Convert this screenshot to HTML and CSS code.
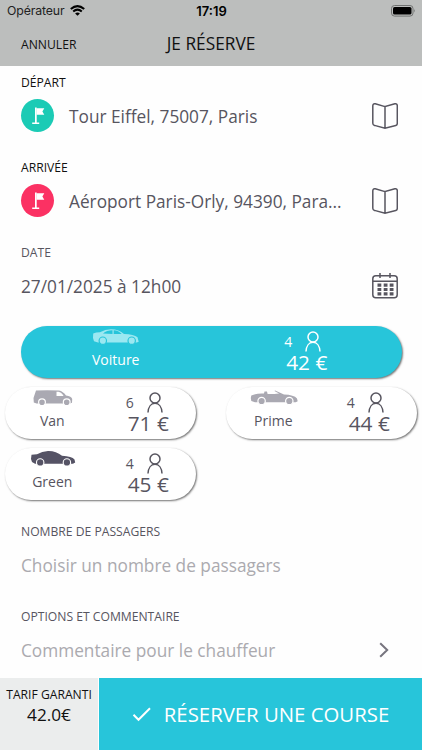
FILE: index.html
```html
<!DOCTYPE html>
<html lang="fr">
<head>
<meta charset="utf-8">
<title>Je réserve</title>
<link rel="stylesheet" href="styles.css">
</head>
<body>
<svg class="defs" width="0" height="0">
  <symbol id="flag" viewBox="0 0 33 33"><path d="M14 8.500h1.700v15h2.500v1.500h-7v-1.500H14z"/><path d="M15.500 9.200h7.800l-1.900 3.200 1.900 3.300h-7.800z"/></symbol>
  <symbol id="book" viewBox="0 0 26 26"><path d="M13 3.600 3.300.8Q.9.400.8 2.800v17.500q0 1.700 1.700 2.100L13 25.200l10.800-2.800q1.500-.4 1.500-2.100V2.800Q25.200.400 22.800.8L13 3.600v21.600"/></symbol>
  <symbol id="person" viewBox="0 0 16 21"><circle cx="8" cy="6" r="5"/><path d="M1 20.500C1.300 15 4 11.300 8 11.300s6.700 3.700 7 9.200"/></symbol>
</svg>
<div class="app">
  <header class="top">
    <div class="status">
      <div class="carrier"><span>Opérateur</span><svg width="15" height="11" viewBox="0 0 15 11"><g fill="none" stroke="#000" stroke-width="2.100"><path d="M.8 4Q7.500-1.700 14.200 4M3.200 6.500q4.300-3.600 8.600 0"/></g><path d="M5.100 8.400q2.400-1.800 4.800 0l-2.400 2.400z"/></svg></div>
      <div class="time">17:19</div>
      <div class="battery"><svg width="25" height="12" viewBox="0 0 25 12"><rect x=".5" y=".5" width="21.500" height="10.600" rx="3" fill="none" stroke="#707271"/><rect x="2" y="2" width="18.500" height="7.600" rx="1.600"/><path d="M23.200 4q1.600 1.800 0 3.600z" fill="#707271"/></svg></div>
    </div>
    <div class="nav"><span class="cancel">ANNULER</span><h1>JE RÉSERVE</h1><span></span></div>
  </header>
  <main>
    <section class="field strong">
      <h2>DÉPART</h2>
      <div class="row"><span class="pin green"><svg width="33" height="33"><use href="#flag"/></svg></span><span class="value">Tour Eiffel, 75007, Paris</span><svg class="line end" width="26" height="26"><use href="#book"/></svg></div>
    </section>
    <section class="field strong">
      <h2>ARRIVÉE</h2>
      <div class="row"><span class="pin red"><svg width="33" height="33"><use href="#flag"/></svg></span><span class="value">Aéroport Paris-Orly, 94390, Para...</span><svg class="line end" width="26" height="26"><use href="#book"/></svg></div>
    </section>
    <section class="field">
      <h2>DATE</h2>
      <div class="row"><span class="value">27/01/2025 à 12h00</span><svg class="end" width="26" height="26" viewBox="0 0 26 26"><g fill="none" stroke="#57555f" stroke-width="1.500"><rect x=".8" y="2.700" width="24.400" height="22" rx="3"/><path d="M1 8.200h24M8 0v5M18 0v5"/></g><path d="M5.500 10.500h3.800v3.200H5.500zm6.200 0h3.800v3.200h-3.800zm6 0h3.800v3.200h-3.800zM5.500 14.900h3.800v3.200H5.500zm6.200 0h3.800v3.200h-3.800zm6 0h3.800v3.200h-3.800zM5.500 19.300h3.800v3.200H5.500zm6.200 0h3.800v3.200h-3.800zm6 0h3.800v3.200h-3.800z" fill="#57555f"/></svg></div>
    </section>
    <section class="cars">
      <article class="car selected">
        <div class="kind"><svg width="48" height="16" viewBox="0 0 48 16"><path fill="#9be8f1" fill-rule="evenodd" d="M1.200 4.500Q4 3.200 8 3.200 13 .3 19 .2q8 0 13 4.900 10 .3 13.500 3.200l1.200 4.500-2 .6H6L2 12.200 1 9zM11 4.500l9.500.6V1.300Q15 1.200 11 4.500zM21.700 1.300v3.800h8Q26.500 1.500 21.700 1.300z"/><g fill="#9be8f1" stroke="#27c5da" stroke-width="1.200"><circle cx="10.800" cy="11.700" r="3.700"/><circle cx="39.700" cy="11.700" r="3.700"/></g></svg><span>Voiture</span></div>
        <div class="fare"><div class="seats"><span>4</span><svg class="line" width="16" height="21"><use href="#person"/></svg></div><b>42 €</b></div>
      </article>
      <article class="car">
        <div class="kind"><svg width="40" height="16" viewBox="0 0 40 16"><path fill="#aaa9b2" fill-rule="evenodd" d="M3 .4Q16-.1 26 .5q4 .8 7 5 5.500.6 6.200 3.500l-.2 3.800-2 .8H3.500L.8 12.500.5 8zM23.500 1.800v4.300h6.500l.5-.6q-2.500-3.400-5-3.700z"/><g fill="#aaa9b2" stroke="#fff" stroke-width="1.200"><circle cx="9" cy="12.300" r="3.400"/><circle cx="33.700" cy="12.300" r="3.400"/></g></svg><span>Van</span></div>
        <div class="fare"><div class="seats"><span>6</span><svg class="line" width="16" height="21"><use href="#person"/></svg></div><b>71 €</b></div>
      </article>
      <article class="car">
        <div class="kind"><svg width="48" height="16" viewBox="0 0 48 16"><path fill="#aaa9b2" d="M1.300 5.500Q7 3 14 3.500l.5-2 2.500.1.600 2.400h7l2-.2 2.500-.2-4.600-2.600.6-.6L34 4.500q10 .3 13 4l.7 2.700-2 1.100H5L1.300 11 .8 8z"/><g fill="#aaa9b2" stroke="#fff" stroke-width="1.200"><circle cx="11.600" cy="11" r="3.700"/><circle cx="39.300" cy="11" r="3.700"/></g></svg><span>Prime</span></div>
        <div class="fare"><div class="seats"><span>4</span><svg class="line" width="16" height="21"><use href="#person"/></svg></div><b>44 €</b></div>
      </article>
      <article class="car">
        <div class="kind"><svg width="48" height="16" viewBox="0 0 48 16"><path fill="#555365" d="M2.500 3.700 8 3.200Q13 .4 19 .1q8-.2 14 4.700 10 .4 12.500 3.700l.7 3-2.200 1.300H6L3 11 2 8z"/><g fill="#555365" stroke="#fff" stroke-width="1.100"><circle cx="11.200" cy="11.400" r="3.700"/><circle cx="37.900" cy="11.400" r="3.700"/></g></svg><span>Green</span></div>
        <div class="fare"><div class="seats"><span>4</span><svg class="line" width="16" height="21"><use href="#person"/></svg></div><b>45 €</b></div>
      </article>
    </section>
    <section class="field lower">
      <h2>NOMBRE DE PASSAGERS</h2>
      <div class="row"><span class="value hint">Choisir un nombre de passagers</span></div>
    </section>
    <section class="field lower">
      <h2>OPTIONS ET COMMENTAIRE</h2>
      <div class="row"><span class="value hint">Commentaire pour le chauffeur</span><svg class="end chevron" width="10" height="16" viewBox="0 0 10 16"><path d="m1.200 1.200 7 6.800-7 6.800" fill="none" stroke="#77757f" stroke-width="2"/></svg></div>
    </section>
  </main>
  <footer>
    <div class="tariff"><span>TARIF GARANTI</span><strong>42.0€</strong></div>
    <button><svg width="20" height="15" viewBox="0 0 20 15"><path d="m1.500 7.800 5 5L18 1.300" fill="none" stroke="#fff" stroke-width="2"/></svg><span>RÉSERVER UNE COURSE</span></button>
  </footer>
</div>
</body>
</html>
```
FILE: styles.css
```css
* { box-sizing: border-box; }
body { margin: 0; background: #fefefe; font-family: "Open Sans", "Noto Sans", sans-serif; color: #57555f; }
h1, h2 { margin: 0; font-weight: 400; }
svg { display: block; flex: none; }
.defs { position: absolute; }
.app { width: 422px; height: 750px; display: flex; flex-direction: column; overflow: hidden; }
.top { height: 66px; background: #bcbebd; color: #111; flex: none; }
.status { height: 22px; display: grid; grid-template-columns: 1fr 60px 1fr; align-items: center; padding: 0 6px 0 7px; font: 12.3px/22px Inter, sans-serif; color: #000; }
.carrier { display: flex; align-items: center; gap: 5px; color: #222; }
.carrier svg { margin-top: -2px; }
.carrier span { letter-spacing: -.12px; }
.time { text-align: center; font-weight: 600; font-size: 13px; }
.battery { justify-self: end; }
.nav { display: grid; grid-template-columns: 1fr auto 1fr; align-items: center; padding: 0 21px; height: 43px; }
.cancel { font-size: 12.15px; padding-top: 2px; }
h1 { font-size: 17.3px; line-height: 24px; }
main { flex: 1; min-height: 0; overflow: hidden; padding-top: 8px; }
.field { height: 85px; padding: 0 24px 0 21px; }
h2 { font-size: 12.15px; line-height: 16px; padding-top: 1px; white-space: nowrap; }
.strong h2 { color: #111; }
.row { display: flex; align-items: center; height: 34px; margin-top: 8px; }
.value { font-size: 17.25px; line-height: 24px; margin-top: 1px; white-space: nowrap; }
.lower h2 { padding: 0; }
.hint { color: #abaaaf; }
.end { margin-left: auto; }
.chevron { margin: -1px 9px 0 auto; }
.pin { width: 33px; height: 33px; border-radius: 50%; margin: -1px 15px 0 0; fill: #fff; }
.green { background: #1bcbb5; }
.red { background: #fb3163; }
.line { fill: none; stroke: #57555f; stroke-width: 1.5; }
.cars { display: grid; grid-template-columns: 191px 191px; justify-content: space-between; row-gap: 9px; padding: 0 5px; margin: -3px 0 24px; }
.car { display: grid; grid-template-columns: 1fr 1fr; height: 52px; border-radius: 26px; background: #fff; box-shadow: 1px 1px 2px rgba(0, 0, 0, .55); }
.selected { grid-column: 1 / -1; margin: 0 15px 0 16px; background: #27c5da; color: #fff; }
.kind, .fare { display: flex; flex-direction: column; align-items: center; }
.kind { padding-top: 3px; font-size: 14px; line-height: 20px; }
.kind span { margin: 5px 1px 0 0; }
.fare { padding-top: 5px; }
.seats { display: flex; align-items: center; gap: 13px; height: 21px; margin-right: 8px; font-size: 14px; line-height: 16px; }
.fare b { font-weight: 400; font-size: 20.8px; line-height: 24px; margin-top: -2px; }
.selected .line { stroke: #fff; }
footer { height: 72px; flex: none; display: flex; }
.tariff { width: 98px; background: #ebeded; color: #111; display: flex; flex-direction: column; align-items: center; padding-top: 8px; font-size: 12.15px; line-height: 17px; white-space: nowrap; }
.tariff strong { font-weight: 400; font-size: 17.2px; line-height: 22px; margin-top: 1px; }
button { flex: 1; border: 0; margin: 0 0 0 1px; padding: 0; background: #27c5da; color: #fff; font: 20.35px/28px "Open Sans", sans-serif; display: flex; align-items: center; justify-content: center; gap: 12px; white-space: nowrap; }
```
